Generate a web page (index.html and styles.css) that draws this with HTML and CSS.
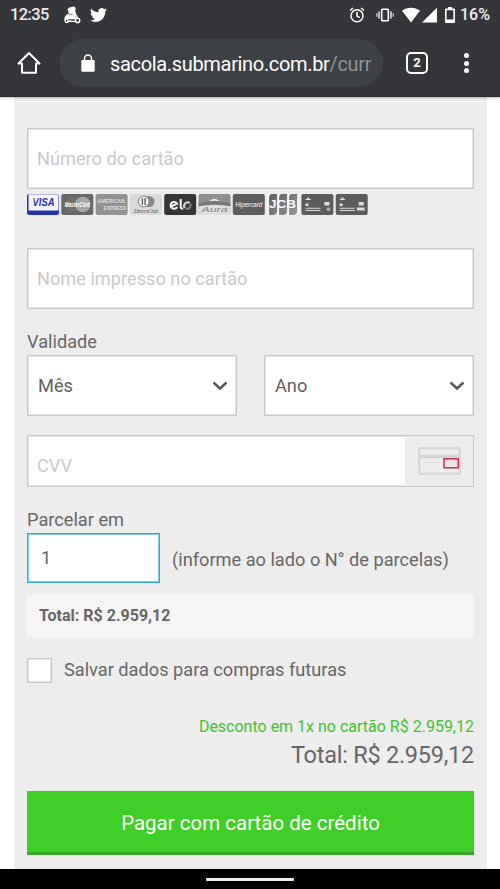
FILE: index.html
```html
<!DOCTYPE html>
<html lang="pt-BR">
<head>
<meta charset="utf-8">
<meta name="viewport" content="width=device-width">
<title>Pagamento</title>
<link rel="stylesheet" href="styles.css">
</head>
<body>
<header class="chrome">
  <div class="status">
    <span class="clock">12:35</span>
    <svg class="rider" width="18" height="18" viewBox="0 0 18 18" fill="#fff"><path d="M4.500 3 7 1.200 11.500.5l1.300 2.300-.6 2.500 1 2.500-.7 2 .8 2.600-2.300 1.800H6.500L5 12l1.500-3L5.500 6.500z"/><path d="M1.500 12c.5-2 2-4 5-4.500L6 12l2.500 2.500H1zM12 8.500l2 .3 1 3.200-1 1z"/><circle cx="3.700" cy="15" r="1.600" fill="#35363a" stroke="#fff" stroke-width="1.200"/><circle cx="14.600" cy="14.400" r="2.100" fill="#35363a" stroke="#fff" stroke-width="1.500"/><path d="M5 13.500h7M6.500 8l3 1" stroke="#35363a" stroke-width=".7"/><path d="M4 15.500h9" stroke="#fff" stroke-width="1.200"/></svg>
    <svg class="bird" width="17" height="18" viewBox="0 0 24 24" fill="#fff"><path d="M23.950 4.570a10 10 0 0 1-2.820.77 4.960 4.960 0 0 0 2.160-2.720c-.95.55-2 .95-3.130 1.180a4.920 4.920 0 0 0-8.380 4.480C7.690 8.090 4.070 6.130 1.640 3.160a4.820 4.820 0 0 0-.67 2.480c0 1.710.87 3.210 2.190 4.100a4.900 4.900 0 0 1-2.230-.62v.06a4.920 4.920 0 0 0 3.950 4.830 5 5 0 0 1-2.210.08 4.940 4.940 0 0 0 4.600 3.420A9.870 9.870 0 0 1 0 19.540a13.990 13.990 0 0 0 7.550 2.210c9.050 0 14-7.500 14-13.980 0-.21 0-.42-.02-.63a9.940 9.940 0 0 0 2.460-2.550z"/></svg>
    <span class="grow"></span>
    <svg class="alarm" width="16" height="16" viewBox="0 0 16 16" fill="none" stroke="#fff" stroke-width="1.500"><circle cx="8" cy="8.800" r="6"/><path d="M8 5v4l2.700 1.600M1 3.500 4 1M15 3.500 12 1"/></svg>
    <svg class="vibrate" width="18" height="14" viewBox="0 0 18 14" fill="none" stroke="#fff"><rect x="5.700" y="1.200" width="6.600" height="11.600" rx=".8" stroke-width="1.600"/><path d="M3 3.500v7M15 3.500v7" stroke="#bcbcbe" stroke-width="2"/><path d="M.8 5.200v3.600M17.200 5.200v3.600" stroke="#d8d8da" stroke-width="1.200"/></svg>
    <svg class="signal" width="36" height="17" viewBox="0 0 36 17" fill="#fff"><path d="M0 3.800C5-.2 13-.2 18 3.800L9 15.500zM35 .8v14.700H20z"/></svg>
    <svg class="battery" width="10" height="16" viewBox="0 0 10 16"><path fill="#fff" fill-rule="evenodd" d="M3 0h4v1.500h2q1 0 1 1V15q0 1-1 1H1q-1 0-1-1V2.500q0-1 1-1h2zM1.600 3.200v9.300h6.800V3.200z"/></svg>
    <span class="percent">16%</span>
  </div>
  <div class="toolbar">
    <svg class="home" width="24" height="24" viewBox="0 0 24 24" fill="none" stroke="#fff" stroke-width="2"><path d="M1.500 12.500H5v9.200h14v-9.200h3.500L12 2z" stroke-linejoin="round"/></svg>
    <div class="address">
      <svg width="14" height="18" viewBox="0 0 14 18"><rect x=".3" y="6" width="13.400" height="11.700" rx="1.200" fill="#fff"/><path d="M3.500 7V4.500a3.500 3.500 0 0 1 7 0V7" fill="none" stroke="#fff" stroke-width="1.500"/></svg>
      <span class="url">sacola.submarino.com.br<span class="path">/curr</span></span>
    </div>
    <span class="tabs">2</span>
    <span class="more"><i></i><i></i><i></i></span>
  </div>
</header>
<main class="panel">
  <div class="field number">Número do cartão</div>
  <svg class="cards" width="342" height="21" viewBox="0 0 342 21">
    <defs><linearGradient id="steel" x2="1" y2="1"><stop offset="0" stop-color="#5c5c5c"/><stop offset="1" stop-color="#969696"/></linearGradient></defs>
    <g><rect width="32" height="21" rx="2" fill="#2633a6"/><path d="M1.500.3h30v16.200h-30z" fill="#f3f4fa"/><text x="5.500" y="12" font-size="10.500" textLength="22" lengthAdjust="spacingAndGlyphs" font-weight="700" font-style="italic" fill="#26319d">VISA</text><path d="M5 4.300h2.500l1 3z" fill="#e9a83a"/></g>
    <g transform="translate(34.300)"><rect width="32" height="21" rx="2" fill="#676767"/><circle cx="12" cy="10.500" r="7.700" fill="#6f6f6f"/><circle cx="21.500" cy="10.500" r="7.700" fill="#a7a7a7"/><text x="3.500" y="13" font-size="6.500" textLength="25" lengthAdjust="spacingAndGlyphs" font-weight="700" font-style="italic" fill="#fff">MasterCard</text></g>
    <g transform="translate(68.600)"><rect width="32" height="21" rx="2" fill="#929292"/><g fill="#dedede" font-weight="700"><text x="2" y="9" font-size="5.500" textLength="27" lengthAdjust="spacingAndGlyphs">AMERICAN</text><text x="8" y="15.800" font-size="5.500" textLength="22.500" lengthAdjust="spacingAndGlyphs">EXPRESS</text></g></g>
    <g transform="translate(102.900)"><rect width="32" height="21" rx="2" fill="#dadada"/><circle cx="19" cy="7.500" r="5.600" fill="#888"/><circle cx="13.800" cy="7.500" r="5.400" fill="#f5f5f5" stroke="#777"/><path d="M12.500 4v7M15.200 4v7" stroke="#555" stroke-width="1.300"/><text x="4" y="18.500" class="script" font-size="6" textLength="24" lengthAdjust="spacingAndGlyphs" font-style="italic" fill="#444">DinersClub</text></g>
    <g transform="translate(137.200)"><rect width="32" height="21" rx="2" fill="#353535"/><g fill="none" stroke="#fff" stroke-width="2"><path d="m6.500 12.500 6.500-2.700c-1-3-6.500-2.200-6.500 1.500 0 4 5 4.500 6.500 1.700M16.500 5v8q0 2 2.500 1.600"/><path d="M25.500 9A3.600 3.600 0 0 0 20.500 14" stroke="#ddd"/><path d="M21.500 14.500a3.600 3.600 0 0 0 4.700-4.700" stroke="#888"/></g></g>
    <g transform="translate(171.500)"><rect width="32" height="21" rx="2" fill="#8f8f8f"/><path d="M0 12Q16 7 32 12v7q0 2-2 2H2q-2 0-2-2z" fill="#dedede"/><path d="M0 9.500Q16 4 32 9.500v2.700q-16-3-32 0z" fill="#777"/><path d="M10.500 7.300q5.500-5 11 0-5.500-1.200-11 0z" fill="#eee"/><text x="3" y="18" font-size="6.500" textLength="26" lengthAdjust="spacingAndGlyphs" font-style="italic" fill="#858585">Aura</text></g>
    <g transform="translate(205.800)"><rect width="32" height="21" rx="2" fill="#5d5d5d"/><text x="2.500" y="13" font-size="7.500" textLength="27" lengthAdjust="spacingAndGlyphs" font-style="italic" fill="#fff">Hipercard</text></g>
    <g transform="translate(240.100)"><rect width="32" height="21" rx="2" fill="#f7f7f7"/><path d="M5 0h5v17q0 4-4 4H2V4q0-4 3-4zM15 0h5v17q0 4-4 4h-4V4q0-4 3-4zM25 0h5v17q0 4-4 4h-4V4q0-4 3-4z" fill="url(#steel)"/><text x="2" y="14" font-size="10" textLength="27" lengthAdjust="spacingAndGlyphs" font-weight="700" fill="#fff">JCB</text></g>
    <g transform="translate(274.400)"><rect width="32" height="21" rx="2" fill="#5c5c5c"/><path d="M3 6h7L8 4.500 6.500 3 5.500 4.700zM4 9.500h3V12H4zM23 8h5v3.500h-5zM4 13.700h15v1H4zM4 16h15v1H4z" fill="#ddd"/><circle cx="27" cy="15.200" r="1.900" fill="#aaa"/></g>
    <g transform="translate(308.700)"><rect width="32" height="21" rx="2" fill="#5c5c5c"/><path d="M3 6h7L8 4.500 6.500 3 5.500 4.700zM4 9.500h3V12H4zM23 8h5v3.500h-5zM4 13.700h15v1H4zM4 16h15v1H4zM21 13.500h8v3h-8z" fill="#ddd"/></g>
  </svg>
  <div class="field name">Nome impresso no cartão</div>
  <div class="label valid">Validade</div>
  <div class="selects">
    <div class="field select"><span class="month">Mês</span><svg width="16" height="10" viewBox="0 0 16 10"><path d="m1.500 1.500 6.500 6 6.500-6"/></svg></div>
    <div class="field select"><span class="year">Ano</span><svg width="16" height="10" viewBox="0 0 16 10"><path d="m1.500 1.500 6.500 6 6.500-6"/></svg></div>
  </div>
  <div class="field cvv"><span>CVV</span><div class="hint"><svg width="43" height="28" viewBox="0 0 43 28" fill="none"><rect x="1.300" y="1.300" width="40.400" height="25.400" fill="#eee" stroke="#d8d8d8" stroke-width="2.400"/><path d="M1 9.500h41" stroke="#d4d4d4" stroke-width="3.500"/><path d="M5 15.500h17" stroke="#dfdfdf"/><rect x="26" y="11.800" width="14.300" height="9" fill="#eee4e6" stroke="#c9304c" stroke-width="1.500"/></svg></div></div>
  <div class="label parcel">Parcelar em</div>
  <div class="quota"><div class="field count">1</div><span class="help">(informe ao lado o N° de parcelas)</span></div>
  <div class="subtotal"><span>Total: R$ 2.959,12</span></div>
  <div class="save"><i></i><span>Salvar dados para compras futuras</span></div>
  <div class="discount"><span>Desconto em 1x no cartão R$ 2.959,12</span></div>
  <div class="total"><span>Total: R$ 2.959,12</span></div>
  <div class="pay"><span>Pagar com cartão de crédito</span></div>
</main>
<footer class="nav"><i></i></footer>
</body>
</html>
```
FILE: styles.css
```css
* { box-sizing: border-box; }
body { margin: 0; width: 500px; height: 889px; overflow: hidden; background: #fff; font: 18.2px/22px Roboto, sans-serif; color: #666; display: flex; flex-direction: column; }
svg { display: block; flex: none; }
.chrome { height: 97px; background: #35363a; border-bottom: 1px solid #2c2d30; flex: none; color: #fff; box-shadow: 0 1px 2px #0004; position: relative; }
.status { height: 30px; display: flex; align-items: center; padding: 0 10px; }
.clock { width: 53px; font-size: 16.500px; letter-spacing: -.6px; font-weight: 500; color: #eee; }
.rider { margin-right: 9px; }
.grow { flex: 1; }
.alarm { margin-right: 11px; }
.vibrate { margin-right: 8px; }
.signal { margin-right: 7px; }
.battery { margin-right: 5px; }
.percent { width: 30px; font-size: 16px; font-weight: 500; color: #eee; }
.toolbar { height: 66px; display: flex; align-items: center; padding: 0 31px 0 17px; }
.address { margin-left: 18px; width: 324px; height: 48px; border-radius: 24px; background: #3d4044; display: flex; align-items: center; padding-left: 22px; }
.url { margin: 2px 0 0 15px; font-size: 20px; letter-spacing: -.33px; white-space: nowrap; }
.path { color: #919497; }
.tabs { margin-left: 23px; width: 22px; height: 22px; border: 2px solid #fff; border-radius: 5px; font: 700 13px/18px Roboto, sans-serif; text-align: center; }
.more { margin-left: 36px; display: flex; flex-direction: column; gap: 2.5px; }
.more i { width: 5px; height: 5px; border-radius: 50%; background: #fff; }
.panel { margin: 0 13px 0 14px; padding: 31px 13px 0; height: 772px; background: #ededed; display: flex; flex-direction: column; flex: none; }
.field { border: 1px solid #c8c8c8; box-shadow: inset 0 0 0 1px #e4e4e4; background: #fff; color: #c9c9c9; display: flex; align-items: center; padding-left: 9px; height: 61px; flex: none; }
.cards { margin: 5px 0 33px; font-family: "Liberation Sans", sans-serif; }
.cards .script { font-family: "Liberation Serif", serif; }
.label { height: 22px; flex: none; }
.valid { margin-top: 22px; margin-bottom: 2px; }
.selects { display: grid; grid-template-columns: 1fr 1fr; gap: 27px; flex: none; }
.select { justify-content: space-between; padding: 0 8px 0 10px; color: #5f5f5f; }
.select path { fill: none; stroke: #595a5b; stroke-width: 2.5; }
.cvv { height: 52px; margin-top: 19px; }
.cvv span { padding-top: 10px; }
.hint { margin-left: auto; width: 68px; align-self: stretch; background: #ededed; display: flex; justify-content: center; align-items: center; }
.parcel { margin-top: 22px; margin-bottom: 2px; }
.quota { display: flex; flex: none; }
.count { width: 133px; height: 50px; border-color: #35aad0; box-shadow: inset 0 0 0 1px #7dcbe4; color: #666; padding-left: 13px; }
.help { margin: 16px 0 0 12px; white-space: nowrap; }
.subtotal { margin-top: 11px; height: 44px; padding: 11px 12px; background: #f5f5f5; font-size: 16px; font-weight: 700; flex: none; }
.save { margin-top: 20px; height: 25px; display: flex; align-items: center; flex: none; }
.save i { width: 25px; height: 25px; border: 1px solid #c8c8c8; box-shadow: inset 0 0 0 1px #e4e4e4; background: #fff; margin-right: 12px; }
.save span { margin-top: -2px; }
.discount { margin-top: 33px; height: 22px; text-align: right; font-size: 16px; color: #41c32e; flex: none; }
.total { height: 30px; margin-top: 2px; line-height: 30px; text-align: right; font-size: 23.5px; letter-spacing: -.25px; flex: none; }
.pay { margin-top: 21px; height: 64px; background: #40cf28; border-bottom: 3px solid #35a72b; color: #fff; font-size: 20.5px; display: flex; align-items: center; justify-content: center; flex: none; }
.pay span { padding-top: 2px; }
.nav { height: 20px; background: #000; display: flex; align-items: center; justify-content: center; flex: none; }
.nav i { width: 88px; height: 3px; background: #eee; border-radius: 1px; }
```
